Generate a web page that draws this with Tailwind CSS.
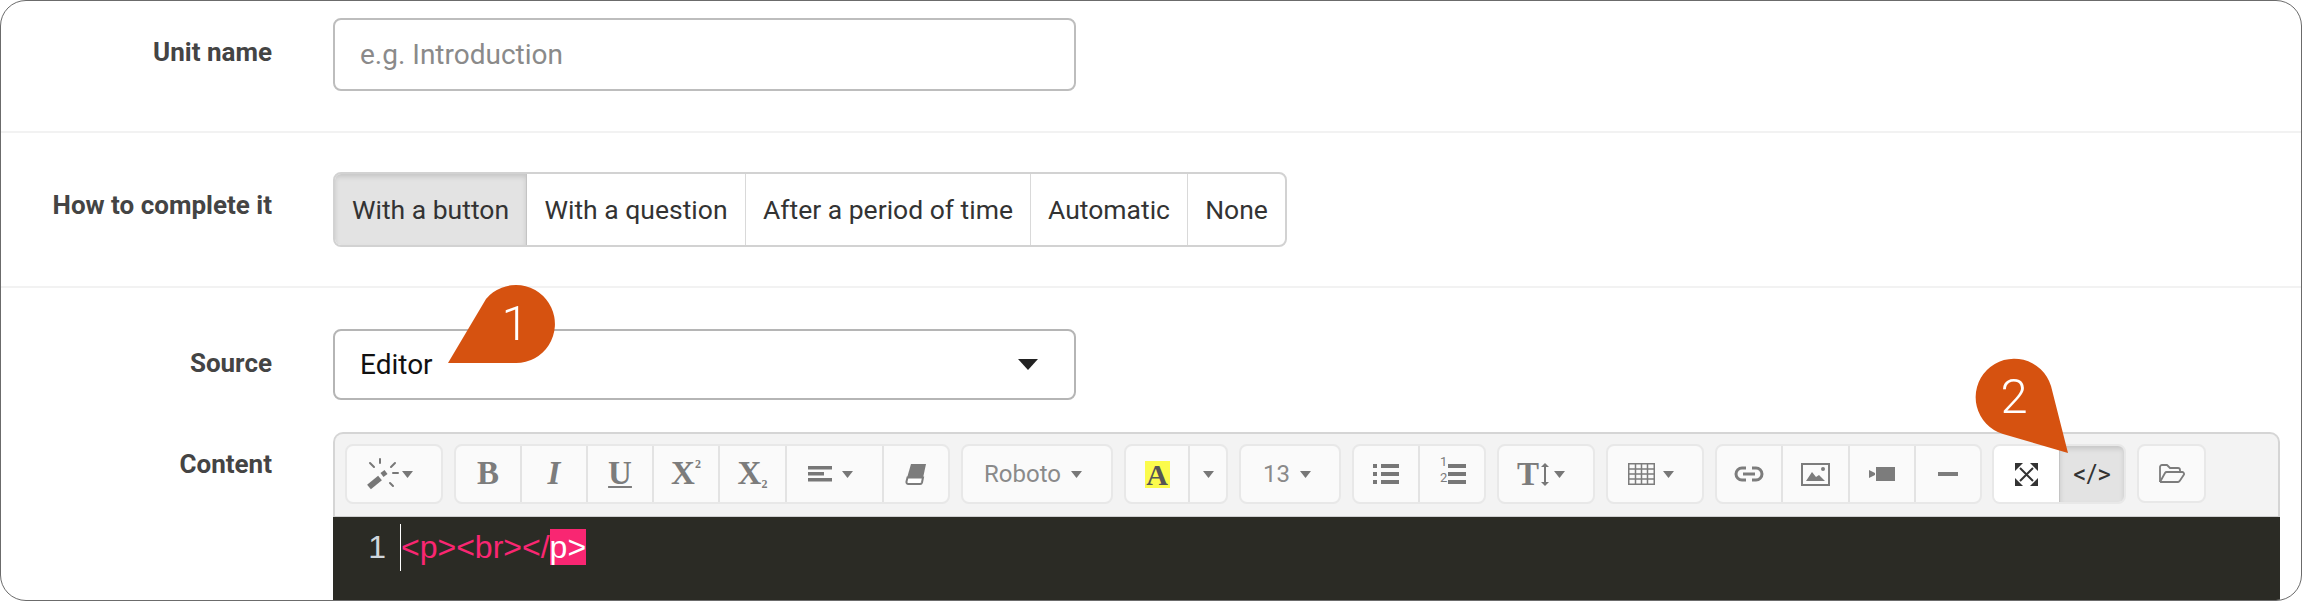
<!DOCTYPE html>
<html lang="en">
<head>
  <meta charset="UTF-8" />
  <meta name="viewport" content="width=device-width, initial-scale=1" />
  <title>Unit editor</title>
  <script src="https://cdn.jsdelivr.net/npm/@tailwindcss/browser@4"></script>
</head>
<body class="bg-white font-['Roboto',sans-serif] overflow-hidden">
  <div class="relative w-[2302px] h-[601px] border border-[#6b6b6b] rounded-[26px] overflow-hidden bg-white">

    <!-- unit name -->
    <div class="flex h-[132px] pt-[17px] border-b-2 border-[#f2f2f2]">
      <label class="w-[271px] text-right text-[26px] font-bold text-[#444] leading-[68px]">Unit name</label>
      <input type="text" placeholder="e.g. Introduction" class="ml-[61px] w-[743px] h-[73px] px-[25px] border-2 border-[#bdbdbd] rounded-[8px] text-[28px] text-[#333] placeholder:text-[#8a8a8a] outline-none" />
    </div>

    <!-- completion mode -->
    <div class="flex h-[155px] pt-[39px] border-b-2 border-[#f2f2f2]">
      <label class="w-[271px] text-right text-[26px] font-bold text-[#444] leading-[66px]">How to complete it</label>
      <div class="ml-[61px] flex h-[75px] border-2 border-[#d2d2d2] rounded-[8px] text-[26.500px] text-[#333] overflow-hidden">
        <div class="w-[192px] flex items-center justify-center bg-[#e3e3e3] shadow-[inset_0_3px_5px_rgba(0,0,0,0.125)] border-r border-[#c4c4c4]">With a button</div>
        <div class="w-[219px] flex items-center justify-center border-r border-[#d9d9d9]">With a question</div>
        <div class="w-[285px] flex items-center justify-center border-r border-[#d9d9d9]">After a period of time</div>
        <div class="w-[157px] flex items-center justify-center border-r border-[#d9d9d9]">Automatic</div>
        <div class="w-[97px] flex items-center justify-center">None</div>
      </div>
    </div>

    <!-- source -->
    <div class="flex pt-[41px]">
      <label class="w-[271px] text-right text-[26px] font-bold text-[#444] leading-[68px]">Source</label>
      <div class="ml-[61px] w-[743px] h-[71px] px-[25px] flex items-center justify-between border-2 border-[#b5b5b5] rounded-[8px] text-[28px] text-[#111]">
        <span>Editor</span>
        <svg width="20" height="11" viewBox="0 0 20 11" class="mr-[11px]"><path d="M0 0h20L10 11z" fill="#222" /></svg>
      </div>
    </div>

    <!-- content -->
    <div class="flex pt-[32px]">
      <label class="w-[271px] text-right text-[26px] font-bold text-[#444] leading-[64px]">Content</label>
      <div class="ml-[61px] w-[1947px]">
        <div class="h-[85px] pt-[10px] pl-[10px] flex gap-[11px] bg-[#f3f3f3] border-2 border-b border-[#d5d5d5] border-b-[#cfcfcf] rounded-t-[10px] text-[#7c7c7c] text-[24px]">

          <div class="w-[98px] h-[60px] pr-[12px] flex items-center justify-center gap-[2px] bg-[#fafafa] border-2 border-[#e8e8e8] rounded-[8px]">
            <svg width="36" height="34" viewBox="0 0 36 34" fill="none" stroke="#777" stroke-linecap="round"><path d="M5 30 16 21" stroke-width="6" stroke-linecap="butt" /><path d="M18 18 22 15" stroke-width="5" stroke-linecap="butt" /><path d="M16 2v4M6 6l4 4M31 6l-4 4M29 16h5M26 26l3 3" stroke-width="2" /></svg>
            <svg width="11" height="7" viewBox="0 0 11 7"><path d="M0 0h11L5.500 7z" fill="#777" /></svg>
          </div>

          <div class="h-[60px] flex bg-[#fafafa] border-2 border-[#e8e8e8] rounded-[8px] font-['Liberation_Serif',serif] text-[33px] font-bold">
            <div class="w-[66px] flex items-center justify-center border-r-2 border-[#e3e3e3]">B</div>
            <div class="w-[66px] flex items-center justify-center border-r-2 border-[#e3e3e3] italic">I</div>
            <div class="w-[66px] flex items-center justify-center border-r-2 border-[#e3e3e3] underline decoration-2 underline-offset-2">U</div>
            <div class="w-[66px] flex items-center justify-center border-r-2 border-[#e3e3e3]"><span>X</span><span class="text-[12px] -mt-[20px]">2</span></div>
            <div class="w-[67px] flex items-center justify-center border-r-2 border-[#e3e3e3]"><span>X</span><span class="text-[12px] mt-[20px]">2</span></div>
            <div class="w-[97px] pr-[8px] flex items-center justify-center gap-[10px] border-r-2 border-[#e3e3e3]">
              <svg width="24" height="16" viewBox="0 0 24 16" fill="#777"><rect width="24" height="3.500" /><rect y="6" width="16" height="3.500" /><rect y="12" width="24" height="3.500" /></svg>
              <svg width="11" height="7" viewBox="0 0 11 7"><path d="M0 0h11L5.500 7z" fill="#777" /></svg>
            </div>
            <div class="w-[64px] flex items-center justify-center">
              <svg width="22" height="22" viewBox="0 0 22 22"><path d="M6 1h15l-3 14H2z" fill="#7c7c7c" /><path d="M2.500 14.500h15.500l-1 5a2 2 0 0 1-2 1.500H3.500a2 2 0 0 1-2-2.500z" fill="#fff" stroke="#7c7c7c" stroke-width="2" /></svg>
            </div>
          </div>

          <div class="w-[152px] h-[60px] pr-[8px] flex items-center justify-center gap-[10px] bg-[#fafafa] border-2 border-[#e8e8e8] rounded-[8px] text-[#8a8a8a]">
            <span>Roboto</span>
            <svg width="11" height="7" viewBox="0 0 11 7"><path d="M0 0h11L5.500 7z" fill="#777" /></svg>
          </div>

          <div class="w-[104px] h-[60px] flex bg-[#fafafa] border-2 border-[#e8e8e8] rounded-[8px]">
            <div class="w-[64px] flex items-center justify-center border-r-2 border-[#e3e3e3]">
              <span class="w-[25px] h-[27px] bg-[#fbfb4c] text-[#555] font-['Liberation_Serif',serif] font-bold text-[30px] leading-[28px] text-center">A</span>
            </div>
            <div class="flex-1 flex items-center justify-center">
              <svg width="11" height="7" viewBox="0 0 11 7"><path d="M0 0h11L5.500 7z" fill="#777" /></svg>
            </div>
          </div>

          <div class="w-[102px] h-[60px] pr-[6px] flex items-center justify-center gap-[10px] bg-[#fafafa] border-2 border-[#e8e8e8] rounded-[8px] text-[#8a8a8a]">
            <span>13</span>
            <svg width="11" height="7" viewBox="0 0 11 7"><path d="M0 0h11L5.500 7z" fill="#777" /></svg>
          </div>

          <div class="w-[134px] h-[60px] flex bg-[#fafafa] border-2 border-[#e8e8e8] rounded-[8px]">
            <div class="w-[66px] flex items-center justify-center border-r-2 border-[#e3e3e3]">
              <svg width="26" height="20" viewBox="0 0 26 20" fill="#777"><rect y="0" width="4" height="4" /><rect x="8" y="0" width="18" height="4" /><rect y="8" width="4" height="4" /><rect x="8" y="8" width="18" height="4" /><rect y="16" width="4" height="4" /><rect x="8" y="16" width="18" height="4" /></svg>
            </div>
            <div class="flex-1 flex items-center justify-center relative">
              <span class="absolute left-[20px] top-[9px] text-[13px] leading-[13px]">1</span>
              <span class="absolute left-[20px] top-[25px] text-[13px] leading-[13px]">2</span>
              <svg width="18" height="20" viewBox="0 0 18 20" fill="#777" class="ml-[10px]"><rect width="18" height="4" /><rect y="8" width="18" height="4" /><rect y="16" width="18" height="4" /></svg>
            </div>
          </div>

          <div class="w-[98px] h-[60px] pr-[10px] flex items-center justify-center bg-[#fafafa] border-2 border-[#e8e8e8] rounded-[8px]">
            <span class="font-['Liberation_Serif',serif] font-bold text-[33px] leading-none">T</span>
            <svg width="8" height="23" viewBox="0 0 8 23" fill="#777" class="ml-[2px]"><path d="M4 0 8 4H5v15h3l-4 4-4-4h3V4H0z" /></svg>
            <svg width="11" height="7" viewBox="0 0 11 7" class="ml-[5px]"><path d="M0 0h11L5.500 7z" fill="#777" /></svg>
          </div>

          <div class="w-[98px] h-[60px] pr-[8px] flex items-center justify-center gap-[8px] bg-[#fafafa] border-2 border-[#e8e8e8] rounded-[8px]">
            <svg width="27" height="22" viewBox="0 0 27 22" fill="none" stroke="#7c7c7c" stroke-width="1.500"><rect x="0.750" y="0.750" width="25.500" height="20.500" /><path d="M7.500 1v20M13.500 1v20M19.500 1v20M1 6h25M1 11h25M1 16h25" /></svg>
            <svg width="11" height="7" viewBox="0 0 11 7"><path d="M0 0h11L5.500 7z" fill="#777" /></svg>
          </div>

          <div class="w-[267px] h-[60px] flex bg-[#fafafa] border-2 border-[#e8e8e8] rounded-[8px]">
            <div class="w-[66px] flex items-center justify-center border-r-2 border-[#e3e3e3]">
              <svg width="30" height="16" viewBox="0 0 30 16" fill="none" stroke="#7c7c7c" stroke-width="3"><path d="M12 2H8a6 6 0 0 0 0 12h4M18 2h4a6 6 0 0 1 0 12h-4M9 8h12" /></svg>
            </div>
            <div class="w-[67px] flex items-center justify-center border-r-2 border-[#e3e3e3]">
              <svg width="29" height="23" viewBox="0 0 29 23"><rect x="1" y="1" width="27" height="21" fill="none" stroke="#7c7c7c" stroke-width="2" /><path d="M5 18 11 9l4 5 3-2 6 6z" fill="#7c7c7c" /><circle cx="22" cy="6" r="2" fill="#7c7c7c" /></svg>
            </div>
            <div class="w-[66px] flex items-center justify-center border-r-2 border-[#e3e3e3]">
              <svg width="26" height="14" viewBox="0 0 26 14" fill="#7c7c7c"><path d="M0 3 6 6v2L0 11z" /><rect x="7" width="19" height="14" /></svg>
            </div>
            <div class="flex-1 flex items-center justify-center">
              <span class="w-[20px] h-[4px] bg-[#7c7c7c]"></span>
            </div>
          </div>

          <div class="w-[134px] h-[60px] -ml-[1px] flex border-2 border-[#e8e8e8] rounded-[8px] overflow-hidden">
            <div class="w-[65px] flex items-center justify-center bg-white">
              <svg width="23" height="23" viewBox="0 0 23 23"><path d="M5 5 18 18M18 5 5 18" stroke="#333" stroke-width="2" /><path d="M0 0h8L0 8zM23 0h-8l8 8zM0 23h8l-8-8zM23 23h-8l8-8z" fill="#333" /></svg>
            </div>
            <div class="flex-1 flex items-center justify-center bg-[#e3e3e3] border-l border-[#c4c4c4] shadow-[inset_0_3px_5px_rgba(0,0,0,0.125)] text-[#333] text-[26px]">&lt;/&gt;</div>
          </div>

          <div class="w-[69px] h-[59px] flex items-center justify-center bg-[#fafafa] border-2 border-[#e8e8e8] rounded-[8px]">
            <svg width="27" height="20" viewBox="0 0 27 20" fill="none" stroke="#7c7c7c" stroke-width="1.800" stroke-linejoin="round"><path d="M2 18V3a2 2 0 0 1 2-2h5l3 3h8a2 2 0 0 1 2 2v2.500" /><path d="M2 18 7 9a2 2 0 0 1 2-1h15a2 2 0 0 1 2 2.500l-4 6a3 3 0 0 1-2 1.500H2" /></svg>
          </div>
        </div>

        <div class="h-[90px] bg-[#2b2b25] flex font-['Liberation_Sans',sans-serif] text-[32px] leading-[37px] pt-[12px]">
          <span class="w-[67px] pr-[14px] text-right text-[#cfd6dc]">1</span>
          <span class="relative pl-[1px] text-[#f92672]">
            <span class="absolute left-0 -top-[5px] w-[1px] h-[47px] bg-white"></span>&lt;p&gt;&lt;br&gt;&lt;/<span class="bg-[#f92672] text-white">p&gt;</span>
          </span>
        </div>
      </div>
    </div>

    <!-- callouts -->
    <svg width="2302" height="601" viewBox="0 0 2302 601" class="absolute -left-[1px] -top-[1px] pointer-events-none">
      <path d="M448 363 486 299A39 39 0 1 1 516 363Z" fill="#d65210" />
      <path d="M2068 453 2003 434A38.500 38.500 0 1 1 2051 386Z" fill="#d65210" />
    </svg>
    <span class="absolute left-[494px] top-[296px] w-[40px] text-center text-[49px] leading-[54px] font-light text-white">1</span>
    <span class="absolute left-[1993px] top-[369px] w-[40px] text-center text-[49px] leading-[54px] font-light text-white">2</span>
  </div>
</body>
</html>
